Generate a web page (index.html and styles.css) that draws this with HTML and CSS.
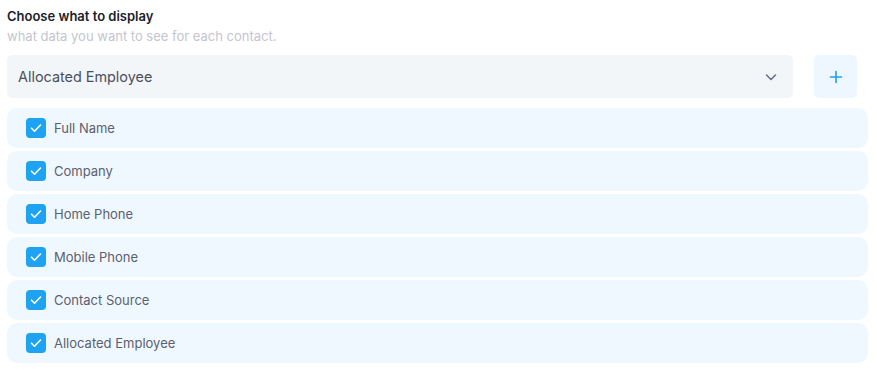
FILE: index.html
```html
<!DOCTYPE html>
<html lang="en">
<head>
	<meta charset="UTF-8">
	<title>Choose what to display</title>
	<link rel="stylesheet" href="styles.css">
</head>
<body>
	<div id="panel">
		<h3 class="title">Choose what to display</h3>
		<p class="subtitle">what data you want to see for each contact.</p>
		<div class="picker">
			<div class="select">
				<span>Allocated Employee</span>
				<svg width="14" height="14" viewBox="0 0 14 14"><path d="M2.5 5l4.5 4.5L11.5 5" fill="none" stroke="#6b7080" stroke-width="1.6" stroke-linecap="round" stroke-linejoin="round"/></svg>
			</div>
			<button class="add">
				<svg width="14" height="14" viewBox="0 0 14 14"><path d="M7 1.5v11M1.5 7h11" stroke="#1e9ff2" stroke-width="1.6" stroke-linecap="round"/></svg>
			</button>
		</div>
		<ul class="fields">
			<li><span class="check"></span>Full Name</li>
			<li><span class="check"></span>Company</li>
			<li><span class="check"></span>Home Phone</li>
			<li><span class="check"></span>Mobile Phone</li>
			<li><span class="check"></span>Contact Source</li>
			<li><span class="check"></span>Allocated Employee</li>
		</ul>
	</div>
</body>
</html>
```

FILE: styles.css
```css
body{
	margin: 0;
	font-family: Inter, "Liberation Sans", sans-serif;
	background: #fff;
}
#panel{
	width: 861px;
	padding: 7px 0 0 7px;
}
.title{
	margin: 0;
	font-size: 13px;
	font-weight: 600;
	line-height: 18px;
	color: #1b1e2b;
}
.subtitle{
	margin: 2px 0 0;
	font-size: 13px;
	line-height: 18px;
	color: #c3c6cf;
}
.picker{
	display: flex;
	gap: 21px;
	margin-top: 10px;
	width: 850px;
}
.select{
	flex: 1;
	display: flex;
	align-items: center;
	justify-content: space-between;
	height: 43px;
	padding: 0 15px 0 11px;
	box-sizing: border-box;
	background: #f3f6f9;
	border-radius: 5px;
	font-size: 14.4px;
	color: #4a4f60;
}
.add{
	width: 43px;
	height: 43px;
	padding: 0;
	border: 0;
	border-radius: 5px;
	background: #eef7ff;
	display: flex;
	align-items: center;
	justify-content: center;
}
.fields{
	list-style: none;
	margin: 10px 0 0;
	padding: 0;
	display: flex;
	flex-direction: column;
	gap: 3px;
}
.fields li{
	display: flex;
	align-items: center;
	gap: 8px;
	height: 40px;
	padding-left: 19px;
	background: #f0f8ff;
	border-radius: 10px;
	font-size: 13px;
	color: #5a6070;
}
.check{
	width: 20px;
	height: 20px;
	border-radius: 4px;
	background: #1ea2f2 url("data:image/svg+xml,%3Csvg xmlns='http://www.w3.org/2000/svg' viewBox='0 0 20 20'%3E%3Cpath d='M5.5 10.2l3 3 6-6.2' fill='none' stroke='white' stroke-width='1.6' stroke-linecap='round' stroke-linejoin='round'/%3E%3C/svg%3E") center/20px no-repeat;
}
```
